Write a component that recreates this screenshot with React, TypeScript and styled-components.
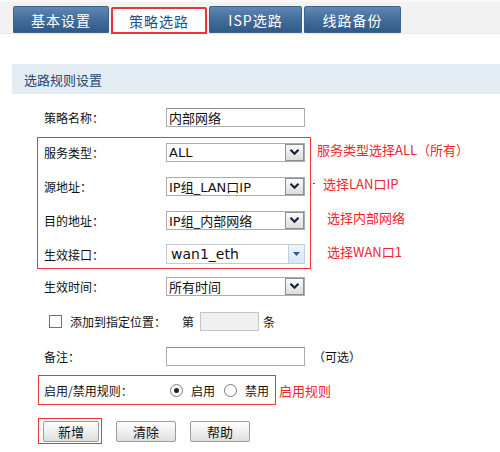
import React from "react";
import styled, { createGlobalStyle } from "styled-components";

const GlobalStyle = createGlobalStyle`
  html, body {
    margin: 0;
    padding: 0;
    background: #fff;
  }
  body {
    font-family: "Noto Sans CJK SC", "DejaVu Sans", sans-serif;
    color: #111;
  }
`;

const tabs = [
  { label: "基本设置", width: 96 },
  { label: "策略选路", width: 96, active: true },
  { label: "ISP选路", width: 93 },
  { label: "线路备份", width: 97 },
];

function Chevron() {
  return (
    <svg width="11" height="8" viewBox="0 0 11 8">
      <path d="M1.5 1.8 L5.5 5.8 L9.5 1.8" fill="none" stroke="#15233d" strokeWidth="2.2" />
    </svg>
  );
}

function Caret() {
  return (
    <svg width="7" height="4" viewBox="0 0 7 4">
      <path d="M0 0 L7 0 L3.5 4 Z" fill="#2f5c94" />
    </svg>
  );
}

function SelectBox({ value, flat }: { value: string; flat?: boolean }) {
  return (
    <Select $flat={flat}>
      <SelectValue $flat={flat}>{value}</SelectValue>
      <ArrowBtn $flat={flat}>{flat ? <Caret /> : <Chevron />}</ArrowBtn>
    </Select>
  );
}

function App() {
  return (
    <Page>
      <GlobalStyle />
      <TabBar>
        {tabs.map((t) => (
          <Tab key={t.label} $w={t.width} $active={t.active}>
            {t.label}
          </Tab>
        ))}
      </TabBar>

      <SectionHeader>选路规则设置</SectionHeader>

      <Form>
        <Row>
          <Label>策略名称：</Label>
          <TextInput>内部网络</TextInput>
        </Row>

        <Group>
          <RedBox>
            <Row>
              <Label>服务类型：</Label>
              <SelectBox value="ALL" />
            </Row>
            <Row>
              <Label>源地址：</Label>
              <SelectBox value="IP组_LAN口IP" />
            </Row>
            <Row>
              <Label>目的地址：</Label>
              <SelectBox value="IP组_内部网络" />
            </Row>
            <Row>
              <Label>生效接口：</Label>
              <SelectBox value="wan1_eth" flat />
            </Row>
          </RedBox>
          <Notes>
            <Note $indent={6}>服务类型选择ALL（所有）</Note>
            <Note $indent={2}>
              <Dot />
              选择LAN口IP
            </Note>
            <Note $indent={16}>选择内部网络</Note>
            <Note $indent={16}>选择WAN口1</Note>
          </Notes>
        </Group>

        <Row>
          <Label>生效时间：</Label>
          <SelectBox value="所有时间" />
        </Row>

        <Row $h={30}>
          <CheckBox />
          <CheckText>添加到指定位置：</CheckText>
          <Inline $ml={16}>第</Inline>
          <SmallInput />
          <Inline $ml={4}>条</Inline>
        </Row>

        <Row>
          <Label>备注：</Label>
          <TextInput />
          <Inline $ml={8}>（可选）</Inline>
        </Row>

        <Row>
          <RedBox $inline>
            <Row>
              <Label>启用/禁用规则：</Label>
              <Radio $checked $ml={4} />
              <RadioText>启用</RadioText>
              <Radio $ml={9} />
              <RadioText>禁用</RadioText>
            </Row>
          </RedBox>
          <Note $indent={3}>启用规则</Note>
        </Row>

        <ButtonRow>
          <ButtonFrame>
            <Button $w={56}>新增</Button>
          </ButtonFrame>
          <Button>清除</Button>
          <Button>帮助</Button>
        </ButtonRow>
      </Form>
    </Page>
  );
}

export default App;

const Page = styled.div`
  width: 500px;
  height: 452px;
  overflow: hidden;
`;

const TabBar = styled.div`
  height: 34px;
  box-sizing: border-box;
  display: flex;
  align-items: flex-end;
  gap: 2px;
  padding-left: 13px;
  background: #f2f2f2;
  border-top: 2px solid #fafafa;
  border-bottom: 1px solid #e9e9e9;
`;

const Tab = styled.div<{ $w: number; $active?: boolean }>`
  width: ${(p) => p.$w}px;
  height: 27px;
  box-sizing: border-box;
  display: flex;
  align-items: center;
  justify-content: center;
  font-size: 14px;
  letter-spacing: 1px;
  border-radius: 2px 2px 0 0;
  color: ${(p) => (p.$active ? "#1f4f86" : "#fff")};
  background: ${(p) =>
    p.$active ? "#fff" : "linear-gradient(#6088b3, #45709d 45%, #2f5a86)"};
  border: ${(p) => (p.$active ? "2px solid #e8343c" : "1px solid #3b6390")};
  ${(p) => (p.$active ? "margin-bottom: -1px;" : "")}
`;

const SectionHeader = styled.div`
  margin: 30px 0 0 12px;
  height: 30px;
  display: flex;
  align-items: center;
  padding-left: 12px;
  background: #e4ecf3;
  color: #1e4877;
  font-size: 13px;
`;

const Form = styled.div`
  display: flex;
  flex-direction: column;
  gap: 6px;
  padding: 9px 0 0 44px;
`;

const Row = styled.div<{ $h?: number }>`
  display: flex;
  align-items: center;
  height: ${(p) => p.$h ?? 28}px;
  white-space: nowrap;
`;

const Label = styled.div`
  width: 122px;
  font-size: 12px;
  color: #111;
`;

const Group = styled.div`
  display: flex;
  align-items: flex-start;
  margin-bottom: -3px;
`;

const RedBox = styled.div<{ $inline?: boolean }>`
  display: flex;
  flex-direction: column;
  gap: 6px;
  margin-left: ${(p) => (p.$inline ? -6 : -7)}px;
  padding: ${(p) => (p.$inline ? "0 6px 0 5px" : "0 5px 0 6px")};
  border: 1px solid #f0353b;
`;

const Notes = styled.div`
  display: flex;
  flex-direction: column;
  gap: 6px;
  margin-top: -2px;
`;

const Note = styled.div<{ $indent: number }>`
  height: 28px;
  display: flex;
  align-items: center;
  margin-left: ${(p) => p.$indent}px;
  color: #f2242c;
  font-size: 13px;
  white-space: nowrap;
`;

const Dot = styled.span`
  width: 2px;
  height: 1px;
  background: #f2242c;
  margin-right: 8px;
`;

const Select = styled.div<{ $flat?: boolean }>`
  width: 139px;
  height: ${(p) => (p.$flat ? 20 : 19)}px;
  box-sizing: border-box;
  display: flex;
  align-items: stretch;
  background: #fff;
  border: 1px solid ${(p) => (p.$flat ? "#c3cbd3" : "#a9adb2")};
`;

const SelectValue = styled.div<{ $flat?: boolean }>`
  flex: 1;
  display: flex;
  align-items: center;
  padding-left: ${(p) => (p.$flat ? 4 : 2)}px;
  font-family: "DejaVu Sans", "Noto Sans CJK SC", sans-serif;
  font-size: ${(p) => (p.$flat ? 14 : 13)}px;
  color: #111;
  overflow: hidden;
`;

const ArrowBtn = styled.div<{ $flat?: boolean }>`
  width: ${(p) => (p.$flat ? 16 : 19)}px;
  box-sizing: border-box;
  display: flex;
  align-items: center;
  justify-content: center;
  ${(p) =>
    p.$flat
      ? `
    border-left: 1px solid #b9cfe6;
    background: linear-gradient(#eef4fb, #d9e6f4);
  `
      : `
    border: 1px solid #8c8f93;
    background: linear-gradient(#fbfbfb, #dcdcdc);
  `}
`;

const TextInput = styled.div`
  width: 139px;
  height: 19px;
  box-sizing: border-box;
  display: flex;
  align-items: center;
  padding-left: 2px;
  font-size: 13px;
  border: 1px solid #a9adb2;
  border-top-color: #8d9196;
  background: #fff;
`;

const CheckBox = styled.div`
  width: 13px;
  height: 13px;
  box-sizing: border-box;
  margin-left: 5px;
  border: 1px solid #6f6f6f;
  background: #fff;
`;

const CheckText = styled.div`
  margin-left: 8px;
  font-size: 12px;
`;

const Inline = styled.div<{ $ml: number }>`
  margin-left: ${(p) => p.$ml}px;
  font-size: 12px;
`;

const SmallInput = styled.div`
  width: 59px;
  height: 19px;
  box-sizing: border-box;
  margin-left: 6px;
  border: 1px solid #c6c6c6;
  background: #f0f0f0;
`;

const Radio = styled.div<{ $checked?: boolean; $ml: number }>`
  width: 13px;
  height: 13px;
  box-sizing: border-box;
  margin-left: ${(p) => p.$ml}px;
  border-radius: 50%;
  border: 1px solid #7a7a7a;
  background: #fff;
  display: flex;
  align-items: center;
  justify-content: center;
  &::after {
    content: "";
    width: 5px;
    height: 5px;
    border-radius: 50%;
    background: ${(p) => (p.$checked ? "#222" : "transparent")};
  }
`;

const RadioText = styled.div`
  margin-left: 8px;
  font-size: 12px;
`;

const ButtonRow = styled.div`
  display: flex;
  align-items: center;
  gap: 14px;
  margin-top: 7px;
  height: 28px;
`;

const ButtonFrame = styled.div`
  margin-left: -6px;
  padding: 2px 2px 1px 4px;
  border: 1px solid #f0353b;
  display: flex;
`;

const Button = styled.div<{ $w?: number }>`
  width: ${(p) => p.$w ?? 60}px;
  height: 21px;
  box-sizing: border-box;
  display: flex;
  align-items: center;
  justify-content: center;
  font-size: 13px;
  color: #111;
  border: 1px solid #9c9c9c;
  border-radius: 2px;
  background: linear-gradient(#ffffff, #ececec 60%, #dedede);
`;
